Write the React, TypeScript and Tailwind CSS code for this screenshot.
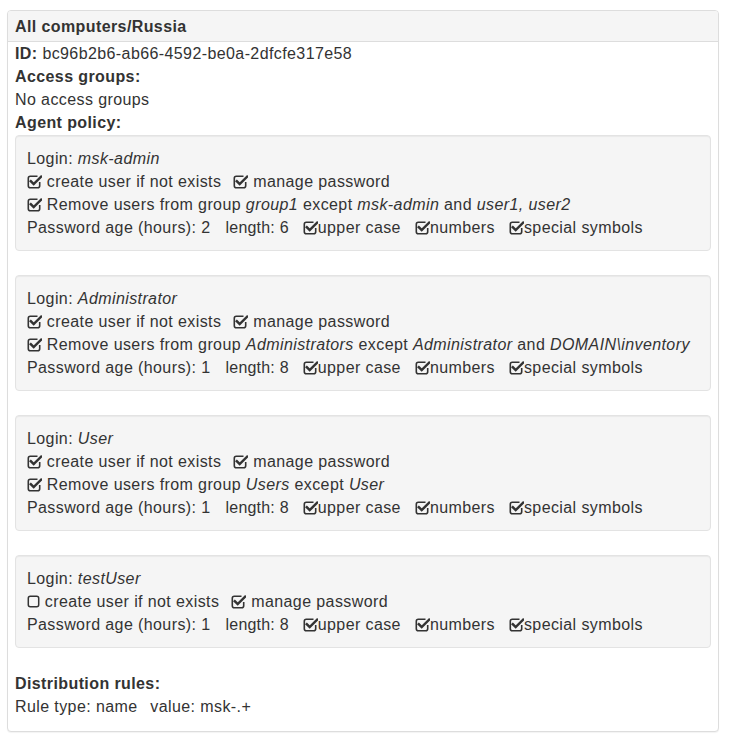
// Agent policy panel for a computer group (Bootstrap-style panel with wells)

type Policy = {
  login: string;
  create: boolean;
  manage: boolean;
  remove?: { group: string; except: string; and?: string };
  age: number;
  length: number;
};

const policies: Policy[] = [
  {
    login: "msk-admin",
    create: true,
    manage: true,
    remove: { group: "group1", except: "msk-admin", and: "user1, user2" },
    age: 2,
    length: 6,
  },
  {
    login: "Administrator",
    create: true,
    manage: true,
    remove: { group: "Administrators", except: "Administrator", and: "DOMAIN\\inventory" },
    age: 1,
    length: 8,
  },
  {
    login: "User",
    create: true,
    manage: true,
    remove: { group: "Users", except: "User" },
    age: 1,
    length: 8,
  },
  { login: "testUser", create: false, manage: true, age: 1, length: 8 },
];

function CheckIcon({ checked }: { checked: boolean }) {
  if (!checked) {
    return (
      <svg width="13" height="16" viewBox="0 0 13 16" className="inline-block align-[-2px]">
        <rect x="1.3" y="3.3" width="10.4" height="10.4" rx="2" fill="none" stroke="#333" strokeWidth="1.5" />
      </svg>
    );
  }
  return (
    <svg width="15" height="16" viewBox="0 0 15 16" className="inline-block align-[-2px]">
      <path
        d="M10.5 3.3H3.3a2 2 0 0 0-2 2v7.4a2 2 0 0 0 2 2h7.4a2 2 0 0 0 2-2V9"
        fill="none"
        stroke="#333"
        strokeWidth="1.6"
      />
      <path d="M3.8 8.2l2.9 2.9 7.4-7.4" fill="none" stroke="#333" strokeWidth="2.5" strokeLinecap="square" />
    </svg>
  );
}

function PolicyWell({ p }: { p: Policy }) {
  return (
    <div className="mb-[24px] rounded-[4px] border border-[#e3e3e3] bg-[#f5f5f5] px-[11px] py-[11px] shadow-[inset_0_1px_1px_rgba(0,0,0,0.05)]">
      <div>
        Login: <i>{p.login}</i>
      </div>
      <div>
        <CheckIcon checked={p.create} /> create user if not exists
        <span className="ml-[12px]">
          <CheckIcon checked={p.manage} /> manage password
        </span>
      </div>
      {p.remove && (
        <div>
          <CheckIcon checked /> Remove users from group <i>{p.remove.group}</i> except{" "}
          <i>{p.remove.except}</i>
          {p.remove.and && (
            <>
              {" "}and <i>{p.remove.and}</i>
            </>
          )}
        </div>
      )}
      <div>
        Password age (hours): {p.age}
        <span className="ml-[15px] tracking-[0.2px]">length: {p.length}</span>
        <span className="ml-[14px]">
          <CheckIcon checked />
          upper case
        </span>
        <span className="ml-[14px]">
          <CheckIcon checked />
          numbers
        </span>
        <span className="ml-[14px]">
          <CheckIcon checked />
          special symbols
        </span>
      </div>
    </div>
  );
}

export default function App() {
  return (
    <div className="min-h-[742px] bg-white pl-[7px] pt-[10px] font-['Liberation_Sans',Arial,sans-serif] text-[16px] leading-[23px] tracking-[0.4px] text-[#333]">
      <div className="w-[712px] rounded-[4px] border border-[#ddd] bg-white shadow-[0_1px_1px_rgba(0,0,0,0.05)]">
        <div className="rounded-t-[3px] border-b border-[#ddd] bg-[#f5f5f5] px-[7px] pb-[3px] pt-[4px] font-bold tracking-[0.4px]">
          All computers/Russia
        </div>
        <div className="px-[7px] pb-[13px]">
          <div>
            <b>ID:</b> bc96b2b6-ab66-4592-be0a-2dfcfe317e58
          </div>
          <div className="font-bold">Access groups:</div>
          <div>No access groups</div>
          <div className="font-bold">Agent policy:</div>
          <div className="pt-px">
            {policies.map((p) => (
              <PolicyWell key={p.login} p={p} />
            ))}
          </div>
          <div className="font-bold">Distribution rules:</div>
          <div>
            Rule type: name <span className="ml-[8px]">value: msk-.+</span>
          </div>
        </div>
      </div>
    </div>
  );
}
